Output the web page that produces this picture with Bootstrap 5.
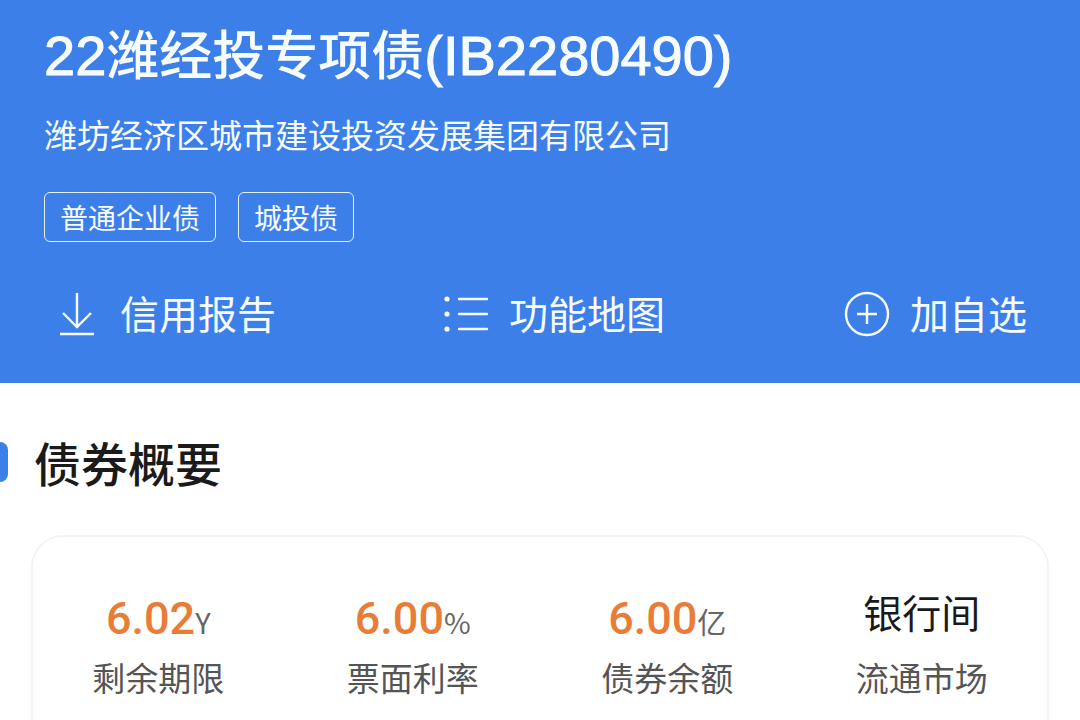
<!DOCTYPE html>
<html lang="zh-CN">
<head>
<meta charset="utf-8">
<meta name="viewport" content="width=device-width, initial-scale=1">
<title>22潍经投专项债(IB2280490)</title>
<link href="https://cdn.jsdelivr.net/npm/bootstrap@5.3.0/dist/css/bootstrap.min.css" rel="stylesheet">
<style>
  body { font-family: "Noto Sans CJK SC", sans-serif; color: #1a1a1a; background: #fff; }
  .bond-header { background: #3d7fe8; color: #f7fcff; padding: 24px 44px 46px; }
  .bond-title { font-size: 53px; line-height: 56px; font-weight: 500; margin: 0 0 28px; }
  .bond-code { font: 400 56px/56px "Liberation Sans", sans-serif; -webkit-text-stroke: 1px currentColor; }
  .issuer { font-size: 33px; line-height: 44px; margin-bottom: 36px; }
  .bond-tags { gap: 22px; margin-bottom: 45px; }
  .bond-tag { font-size: 28px; line-height: 48px; border: 1px solid #e4f1ff; border-radius: 6px; padding: 0 15px; }
  .bond-actions { padding: 0 9px 0 14px; }
  .bond-action { font-size: 39px; line-height: 50px; gap: 20px; padding: 0; border: 0; background: none; color: inherit; }
  .bond-action:last-child { padding-left: 12px; }
  .bond-action svg { margin-top: 4px; fill: none; stroke: currentColor; stroke-width: 2.4; }
  .section-head { padding-top: 48px; margin-bottom: 42px; gap: 26px; }
  .section-mark { width: 8px; height: 40px; background: #3d7fe8; border-radius: 0 8px 8px 0; }
  .section-title { font-size: 47px; line-height: 62px; font-weight: 500; margin: 0; }
  .summary { border: 2px solid #f4f4f4; border-bottom: 0; border-radius: 32px 32px 0 0; margin: 0 31px; padding-top: 48px; }
  .figures { margin: 0 -2px; }
  .figure-value { height: 56px; font-size: 39px; line-height: 52px; }
  .figure-amount { padding-top: 8px; line-height: 48px; }
  .figure-number { font: 500 45px/48px Roboto, sans-serif; color: #e97c36; }
  .figure-unit { font-size: 29px; color: #666; }
  .figure-label { font-size: 33px; line-height: 48px; margin-top: 12px; color: #555; }
</style>
</head>
<body class="d-flex flex-column min-vh-100">
<header class="bond-header">
  <h1 class="bond-title"><span class="bond-code">22</span>潍经投专项债<span class="bond-code">(IB2280490)</span></h1>
  <p class="issuer">潍坊经济区城市建设投资发展集团有限公司</p>
  <div class="bond-tags d-flex flex-wrap">
    <span class="bond-tag">普通企业债</span>
    <span class="bond-tag">城投债</span>
  </div>
  <div class="bond-actions d-flex flex-wrap justify-content-between">
    <button type="button" class="bond-action d-flex align-items-start">
      <svg width="42" height="46" viewBox="0 0 42 46" aria-hidden="true"><path d="M19 2V36M5 22L19 36L33 22M2 43H36"/></svg>
      信用报告
    </button>
    <button type="button" class="bond-action d-flex align-items-start">
      <svg width="46" height="46" viewBox="0 0 46 46" aria-hidden="true"><path stroke-linecap="round" d="M16 8H44M16 23H44M16 38H44"/><g fill="currentColor" stroke="none"><circle cx="4" cy="8" r="2.6"/><circle cx="4" cy="23" r="2.6"/><circle cx="4" cy="38" r="2.6"/></g></svg>
      功能地图
    </button>
    <button type="button" class="bond-action d-flex align-items-start">
      <svg width="46" height="46" viewBox="0 0 46 46" aria-hidden="true"><circle cx="23" cy="23" r="21"/><path d="M13 23H33M23 13V33"/></svg>
      加自选
    </button>
  </div>
</header>
<main class="d-flex flex-column flex-grow-1">
  <div class="section-head d-flex align-items-center">
    <span class="section-mark"></span>
    <h2 class="section-title">债券概要</h2>
  </div>
  <section class="summary flex-grow-1">
    <div class="figures row gx-0 text-center">
      <div class="col-3">
        <div class="figure-value figure-amount"><span class="figure-number">6.02</span><span class="figure-unit">Y</span></div>
        <div class="figure-label">剩余期限</div>
      </div>
      <div class="col-3">
        <div class="figure-value figure-amount"><span class="figure-number">6.00</span><span class="figure-unit">%</span></div>
        <div class="figure-label">票面利率</div>
      </div>
      <div class="col-3">
        <div class="figure-value figure-amount"><span class="figure-number">6.00</span><span class="figure-unit">亿</span></div>
        <div class="figure-label">债券余额</div>
      </div>
      <div class="col-3">
        <div class="figure-value">银行间</div>
        <div class="figure-label">流通市场</div>
      </div>
    </div>
  </section>
</main>
<script src="https://cdn.jsdelivr.net/npm/bootstrap@5.3.0/dist/js/bootstrap.bundle.min.js"></script>
</body>
</html>
